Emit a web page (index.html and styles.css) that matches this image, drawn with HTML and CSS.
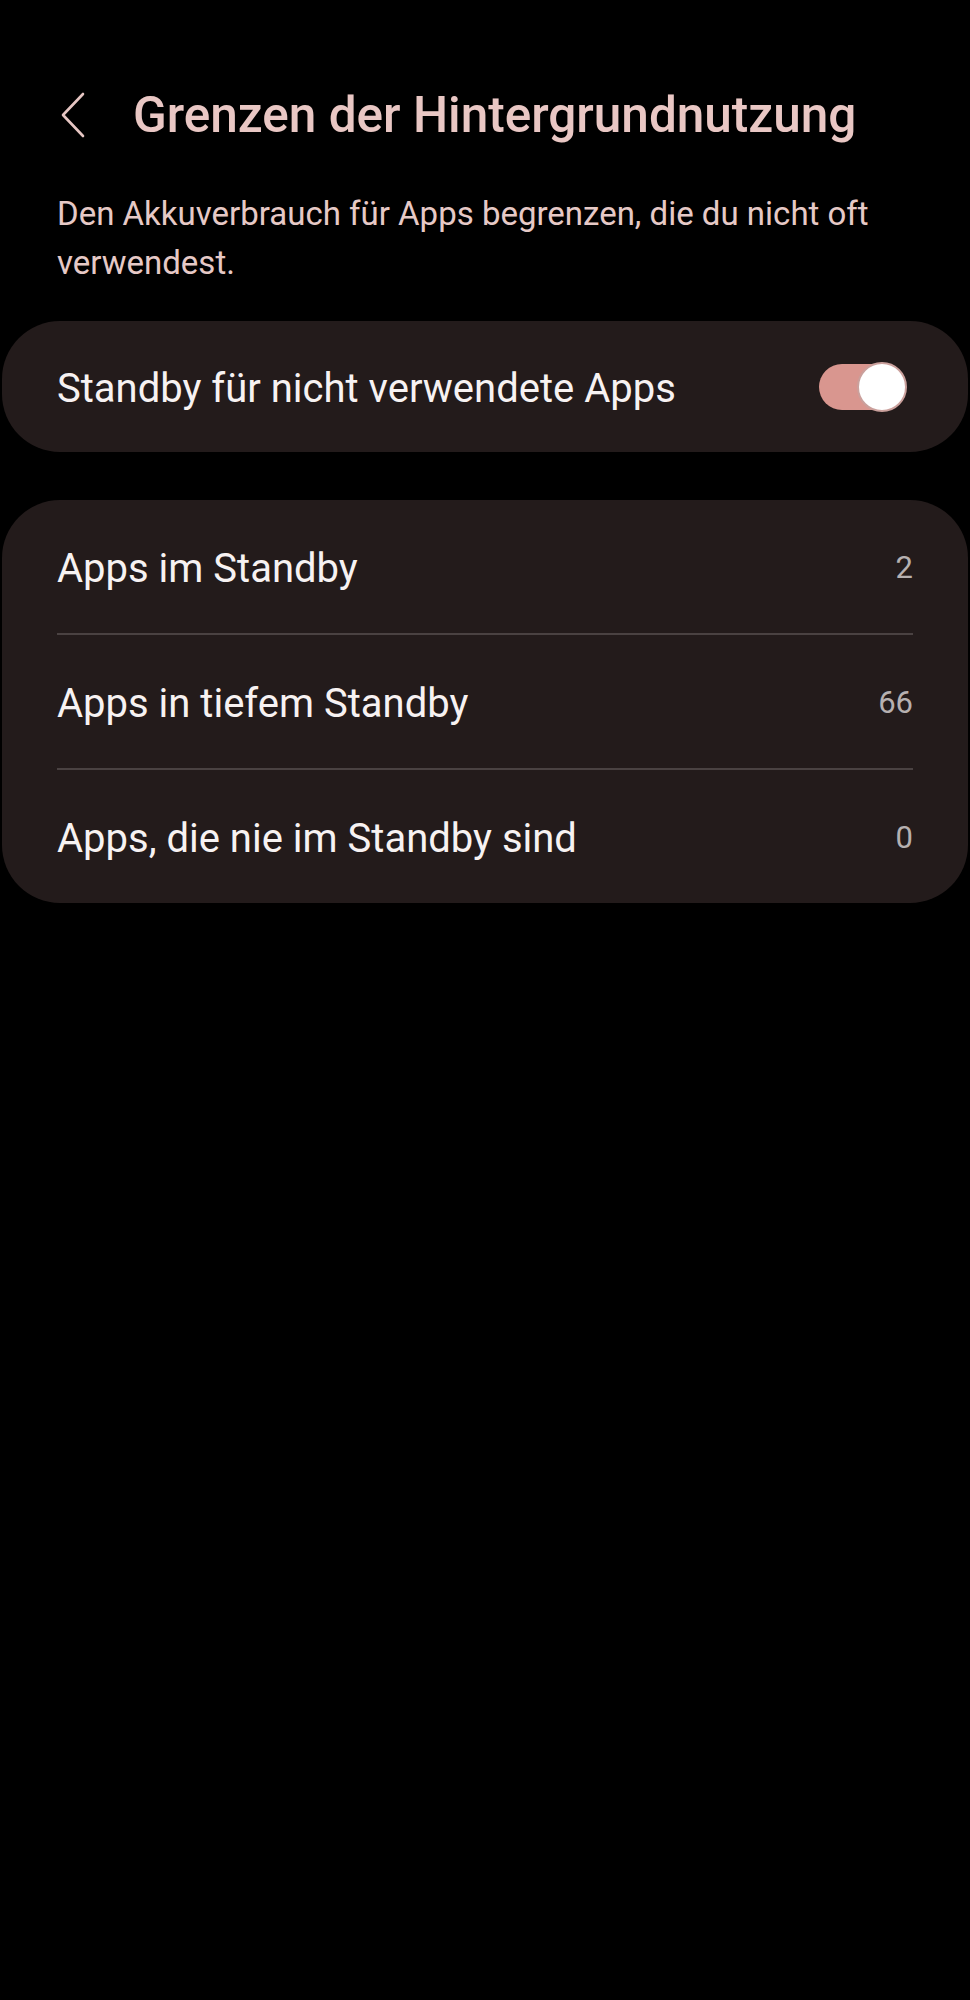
FILE: index.html
```html
<!DOCTYPE html>
<html lang="de">
<head>
<meta charset="utf-8">
<title>Grenzen der Hintergrundnutzung</title>
<link rel="stylesheet" href="styles.css">
</head>
<body>
<div class="screen">
  <header class="topbar">
    <svg class="back" width="26" height="46" viewBox="0 0 26 46" aria-hidden="true">
      <path d="M23 2 L3 23 L23 44" fill="none" stroke="#e6c6c3" stroke-width="2.6" stroke-linecap="round" stroke-linejoin="round"/>
    </svg>
    <h1 class="title">Grenzen der Hintergrundnutzung</h1>
  </header>
  <p class="desc">Den Akkuverbrauch für Apps begrenzen, die du nicht oft verwendest.</p>

  <section class="card card-switch">
    <span class="label">Standby für nicht verwendete Apps</span>
    <span class="switch"><span class="thumb"></span></span>
  </section>

  <section class="card card-list">
    <div class="row">
      <span class="label">Apps im Standby</span>
      <span class="count">2</span>
    </div>
    <div class="divider"></div>
    <div class="row">
      <span class="label">Apps in tiefem Standby</span>
      <span class="count">66</span>
    </div>
    <div class="divider"></div>
    <div class="row">
      <span class="label">Apps, die nie im Standby sind</span>
      <span class="count">0</span>
    </div>
  </section>
</div>
</body>
</html>
```

FILE: styles.css
```css
html, body {
  margin: 0;
  padding: 0;
  background: #000;
}
body {
  font-family: Roboto, "Noto Sans", "Liberation Sans", sans-serif;
  width: 970px;
  min-height: 2000px;
}
.screen {
  display: flex;
  flex-direction: column;
  padding: 0 2px;
}
.topbar {
  display: flex;
  align-items: center;
  height: 60px;
  margin-top: 85px;
  padding-left: 58px;
}
.back {
  flex: none;
  display: block;
}
.title {
  margin: 0 0 0 47px;
  font-size: 49.5px;
  font-weight: 500;
  color: #e9c7c4;
  letter-spacing: 0;
  line-height: 60px;
  white-space: nowrap;
}
.desc {
  margin: 44px 0 0 0;
  padding: 0 70px 0 55px;
  font-size: 33px;
  line-height: 49px;
  color: #e6c9c6;
}
.card {
  background: #231b1b;
  border-radius: 58px;
}
.card-switch {
  margin-top: 34px;
  height: 131px;
  display: flex;
  align-items: center;
  justify-content: space-between;
  padding: 0 61px 0 55px;
}
.label {
  font-size: 40px;
  color: #f7f2f2;
  white-space: nowrap;
  padding-top: 4px;
}
.switch {
  position: relative;
  width: 88px;
  height: 46px;
  display: block;
}
.switch::before {
  content: "";
  position: absolute;
  left: 0;
  top: 0;
  width: 76px;
  height: 46px;
  border-radius: 23px;
  background: #d9968f;
}
.thumb {
  position: absolute;
  right: 0;
  top: -2px;
  width: 46px;
  height: 46px;
  border-radius: 50%;
  background: #fff;
  border: 2px solid #caa09c;
}
.card-list {
  margin-top: 48px;
  display: flex;
  flex-direction: column;
  padding: 0 55px;
}
.row {
  display: flex;
  align-items: center;
  justify-content: space-between;
  height: 133px;
}
.count {
  font-size: 31px;
  color: #b6b0b0;
  padding-top: 2px;
}
.divider {
  height: 2px;
  background: #4a4242;
}
```
